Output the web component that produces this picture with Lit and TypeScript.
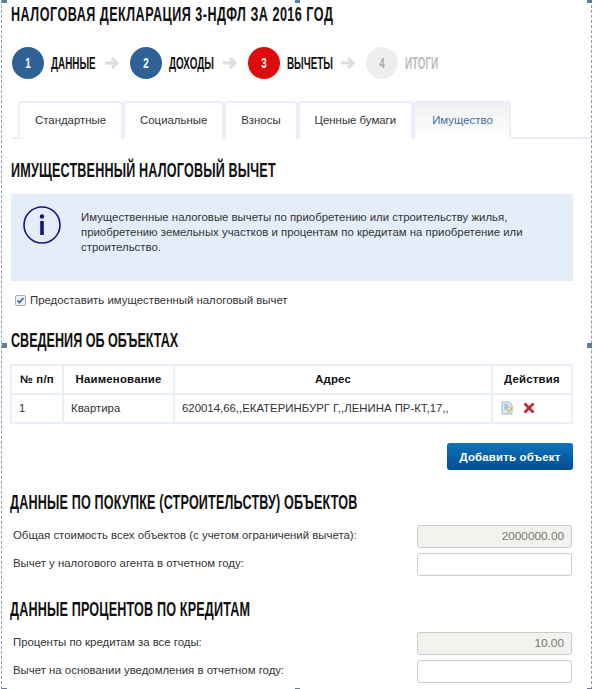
import { LitElement, html, css } from "lit";
import { customElement } from "lit/decorators.js";

@customElement("app-root")
export class AppRoot extends LitElement {
  static styles = css`
    :host { display: block; width: 593px; height: 689px; overflow: hidden; position: relative; background: #fff;
      font-family: "Liberation Sans", Arial, sans-serif; font-size: 11.4px; color: #333; }
    .frame { box-sizing: border-box; width: 591px; height: 689px; margin-left: 1px; padding: 0 18px 0 9px;
      border-left: 1px dashed #8b9cb8; border-right: 1px dashed #8b9cb8; }
    .h { font-weight: 700; color: #111; text-transform: uppercase; margin: 0; white-space: nowrap; font-size: 20px; line-height: 22px; letter-spacing: .27px;
      transform: scaleX(.63); transform-origin: left center; }
    .title { line-height: 24px; padding-top: 2px; letter-spacing: .77px; }
    .steps { display: flex; align-items: center; margin-top: 21px; height: 32px; padding-left: 1px; }
    .circle { width: 32px; height: 32px; border-radius: 50%; background: #2e6294; flex: none; display: flex; align-items: center; justify-content: center; }
    .circle span { color: #fff; font-size: 14px; font-weight: 700; transform: scaleX(.7); }
    .circle.red { background: #dc0c0c; }
    .circle.off { background: #eee; }
    .circle.off span { color: #aaa; }
    .lbl { display: block; width: 45px; margin-left: 7px; white-space: nowrap; font-size: 17px; font-weight: 700; color: #111;
      transform: translateY(1px) scaleX(.58); transform-origin: left center; }
    .lbl.off { color: #bbb; width: 33px; }
    .arrow { margin: 0 10px 0 8px; flex: none; }
    .tabs { display: flex; margin-top: 22px; margin-right: -17px; padding-left: 7px; border-bottom: 2px solid #e8eff8; height: 36px; }
    .tab { box-sizing: border-box; height: 38px; padding: 0 15px 2px; display: flex; align-items: center; border: 2px solid #e8eff8; border-bottom: 0; border-radius: 4px 4px 0 0;
      color: #333; background: #fff; }
    .tab.on { color: #3f6ea8; background: linear-gradient(#f0f0f0, #fff); padding: 0 16px 2px 17px; }
    .s1 { margin-top: 20px; }
    .info { display: flex; background: #e4eefb; height: 87px; margin-top: 13px; box-sizing: border-box; padding: 12px 12px 0 11px; }
    .info p { margin: 4px 0 0 19px; line-height: 15px; color: #333; }
    .check { display: flex; align-items: center; margin: 11px 0 0 4px; height: 16px; }
    .box { box-sizing: border-box; width: 11px; height: 11px; border: 1px solid #aaa; border-radius: 2px; margin-right: 4px; background: #eef3fa; display: flex; }
    .s2 { margin-top: 21px; letter-spacing: 0; }
    table { border-collapse: collapse; width: 561px; margin: 13px 0 0 -1px; table-layout: fixed; }
    th, td { border: 2px solid #e8eff8; padding: 0 7px 2px; height: 29px; box-sizing: border-box; text-align: left; color: #333; white-space: nowrap; }
    th { font-weight: 700; color: #111; text-align: center; letter-spacing: .2px; }
    .c1 { width: 52px; } .c2 { width: 111px; } .c3 { width: 318px; } .c4 { width: 80px; }
    .acts { display: flex; align-items: center; gap: 9px; padding-left: 1px; }
    .btnrow { display: flex; justify-content: flex-end; margin-top: 19px; }
    .btn { width: 126px; height: 27px; padding: 0; border: 0; border-radius: 3px; background: linear-gradient(#0f74b8, #004d95); color: #fff; font: 700 11.4px "Liberation Sans", sans-serif; letter-spacing: .2px; }
    .s3 { margin: 21px 0 0 -1px; }
    .row { display: flex; justify-content: space-between; align-items: center; margin-top: 5px; }
    .row.first { margin-top: 12px; }
    .row label { margin: 0 0 3px 2px; }
    .field { box-sizing: border-box; width: 155px; height: 23px; margin-right: 1px; border: 1px solid #ccc; border-radius: 3px; background: #fff; text-align: right; padding: 0 7px; line-height: 21px; font-size: 11.8px; color: #777; }
    .field.ro { background: #f2f2ee; }
    .s4 { margin: 22px 0 0 -1px; }
    .handle { position: absolute; width: 5px; height: 5px; background: #5f7ba6; }
    .tl { left: 2px; top: -2px; } .tc { left: 295px; top: -2px; } .tr { left: 587px; top: -2px; }
    .ml { left: 2px; top: 343px; } .mr { left: 587px; top: 343px; }
    .bl { left: 2px; top: 688px; } .bc { left: 295px; top: 688px; } .br { left: 587px; top: 688px; }
  `;

  render() {
    const arrow = html`<svg class="arrow" width="16" height="14" viewBox="0 0 16 14"><path d="M1 7h12M8 2l5 5-5 5" fill="none" stroke="#ddd" stroke-width="3"/></svg>`;
    return html`
      <div class="frame">
        <h1 class="h title">Налоговая декларация 3-НДФЛ за 2016 год</h1>
        <div class="steps">
          <div class="circle"><span>1</span></div><span class="lbl">ДАННЫЕ</span>${arrow}
          <div class="circle"><span>2</span></div><span class="lbl">ДОХОДЫ</span>${arrow}
          <div class="circle red"><span>3</span></div><span class="lbl">ВЫЧЕТЫ</span>${arrow}
          <div class="circle off"><span>4</span></div><span class="lbl off">ИТОГИ</span>
        </div>
        <div class="tabs">
          <div class="tab">Стандартные</div><div class="tab">Социальные</div><div class="tab">Взносы</div><div class="tab">Ценные бумаги</div><div class="tab on">Имущество</div>
        </div>
        <h2 class="h s1">Имущественный налоговый вычет</h2>
        <div class="info">
          <svg width="40" height="40" viewBox="0 0 40 40" style="flex:none"><circle cx="20" cy="19" r="18" fill="none" stroke="#14147f" stroke-width="1.6"/><circle cx="20" cy="10.5" r="2.2" fill="#14147f"/><rect x="18.2" y="15" width="3.6" height="14" fill="#14147f"/></svg>
          <p>Имущественные налоговые вычеты по приобретению или строительству жилья, приобретению земельных участков и процентам по кредитам на приобретение или строительство.</p>
        </div>
        <div class="check"><span class="box"><svg width="9" height="9" viewBox="0 0 9 9"><path d="M1.5 4.5l2 2 4-4.5" fill="none" stroke="#2a5fa8" stroke-width="1.6"/></svg></span>Предоставить имущественный налоговый вычет</div>
        <h2 class="h s2">Сведения об объектах</h2>
        <table>
          <colgroup><col class="c1"/><col class="c2"/><col class="c3"/><col class="c4"/></colgroup>
          <tr><th>№ п/п</th><th>Наименование</th><th>Адрес</th><th>Действия</th></tr>
          <tr><td>1</td><td>Квартира</td><td>620014,66,,ЕКАТЕРИНБУРГ Г,,ЛЕНИНА ПР-КТ,17,,</td><td>
            <div class="acts">
              <svg width="13" height="14" viewBox="0 0 13 14"><path d="M1 1h7l3 3v9H1z" fill="#dce9f5" stroke="#9db8d2"/><path d="M3 4h4M3 6h6M3 8h4" stroke="#8ba6c0"/><path d="M6 11l5-5 1 1-5 5z" fill="#e0b030"/></svg>
              <svg width="12" height="12" viewBox="0 0 12 12"><path d="M1.5 1.5l9 9M10.5 1.5l-9 9" stroke="#c0272d" stroke-width="2.6"/></svg>
            </div></td></tr>
        </table>
        <div class="btnrow"><button class="btn">Добавить объект</button></div>
        <h2 class="h s3">Данные по покупке (строительству) объектов</h2>
        <div class="row first"><label>Общая стоимость всех объектов (с учетом ограничений вычета):</label><div class="field ro">2000000.00</div></div>
        <div class="row"><label>Вычет у налогового агента в отчетном году:</label><div class="field"></div></div>
        <h2 class="h s4">Данные процентов по кредитам</h2>
        <div class="row first"><label>Проценты по кредитам за все годы:</label><div class="field ro">10.00</div></div>
        <div class="row"><label>Вычет на основании уведомления в отчетном году:</label><div class="field"></div></div>
      </div>
      <div class="handle tl"></div><div class="handle tc"></div><div class="handle tr"></div>
      <div class="handle ml"></div><div class="handle mr"></div>
      <div class="handle bl"></div><div class="handle bc"></div><div class="handle br"></div>
    `;
  }
}
